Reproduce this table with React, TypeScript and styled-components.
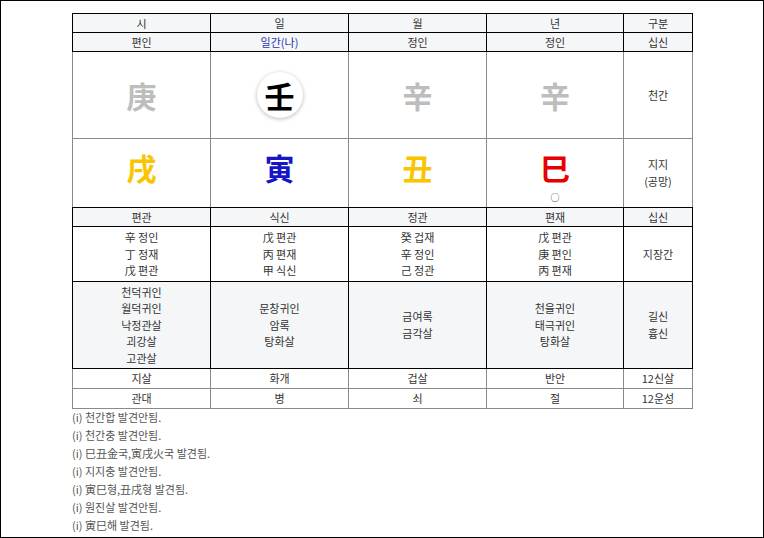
import styled, { createGlobalStyle } from "styled-components";

const GlobalStyle = createGlobalStyle`
  html, body {
    margin: 0;
    padding: 0;
    background: #fff;
  }
  body {
    font-family: "Noto Sans CJK KR", "Noto Sans", sans-serif;
  }
`;

const Frame = styled.div`
  width: 764px;
  height: 538px;
  box-sizing: border-box;
  border: 1px solid #000;
  padding-top: 12px;
`;

const Wrap = styled.div`
  width: 620px;
  margin: 0 auto;
`;

const Table = styled.table`
  width: 620px;
  border-collapse: collapse;
  table-layout: fixed;
  font-size: 11px;
  color: #333;
`;

const Row = styled.tr<{ $h: number }>`
  height: ${(p) => p.$h}px;
`;

const Cell = styled.td<{ $dark?: boolean; $shade?: boolean; $darkBottom?: boolean; $top?: boolean }>`
  border: 1px solid ${(p) => (p.$dark ? "#000" : "#8a8a8a")};
  ${(p) => (p.$darkBottom ? "border-bottom-color: #000;" : "")}
  background: ${(p) => (p.$shade ? "#f5f6f8" : "#fff")};
  text-align: center;
  vertical-align: ${(p) => (p.$top ? "top" : "middle")};
  padding: 0;
  line-height: 16.6px;
`;

const Me = styled.span`
  color: #2b35b0;
`;

const Big = styled.div<{ $color: string }>`
  font-size: 30px;
  font-weight: 700;
  line-height: 30px;
  color: ${(p) => p.$color};
`;

const Circle = styled.div`
  display: inline-flex;
  align-items: center;
  justify-content: center;
  width: 46px;
  height: 46px;
  border-radius: 50%;
  background: #fff;
  box-shadow: 0 1px 4px rgba(0, 0, 0, 0.28);
`;

const BranchBox = styled.div`
  padding-top: 13px;
`;

const Mark = styled.div`
  margin-top: 8px;
  height: 16px;
  line-height: 16px;
  font-size: 9px;
  color: #333;
`;

const Notes = styled.div`
  margin-top: -1px;
  font-size: 11px;
  line-height: 18px;
  color: #555;
`;

const stems = [
  { ch: "庚", color: "#bdbdbd" },
  { ch: "壬", color: "#000", me: true },
  { ch: "辛", color: "#bdbdbd" },
  { ch: "辛", color: "#bdbdbd" },
];

const branches = [
  { ch: "戌", color: "#f8c500", mark: "" },
  { ch: "寅", color: "#1616c8", mark: "" },
  { ch: "丑", color: "#f8c500", mark: "" },
  { ch: "巳", color: "#e60000", mark: "○" },
];

const hidden = [
  ["辛 정인", "丁 정재", "戊 편관"],
  ["戊 편관", "丙 편재", "甲 식신"],
  ["癸 겁재", "辛 정인", "己 정관"],
  ["戊 편관", "庚 편인", "丙 편재"],
];

const sinsal = [
  ["천덕귀인", "월덕귀인", "낙정관살", "괴강살", "고관살"],
  ["문창귀인", "암록", "탕화살"],
  ["금여록", "금각살"],
  ["천을귀인", "태극귀인", "탕화살"],
];

const notes = [
  "천간합 발견안됨.",
  "천간충 발견안됨.",
  "巳丑金국,寅戌火국 발견됨.",
  "지지충 발견안됨.",
  "寅巳형,丑戌형 발견됨.",
  "원진살 발견안됨.",
  "寅巳해 발견됨.",
];

const Lines = ({ items }: { items: string[] }) => (
  <>
    {items.map((t, i) => (
      <div key={i}>{t}</div>
    ))}
  </>
);

export default function App() {
  return (
    <>
      <GlobalStyle />
      <Frame>
        <Wrap>
          <Table>
            <colgroup>
              <col style={{ width: 138 }} />
              <col style={{ width: 138 }} />
              <col style={{ width: 138 }} />
              <col style={{ width: 137 }} />
              <col style={{ width: 69 }} />
            </colgroup>
            <tbody>
              <Row $h={19}>
                {["시", "일", "월", "년", "구분"].map((t) => (
                  <Cell key={t} $dark $shade>
                    {t}
                  </Cell>
                ))}
              </Row>
              <Row $h={19}>
                <Cell $dark $shade>편인</Cell>
                <Cell $dark $shade>
                  <Me>일간(나)</Me>
                </Cell>
                <Cell $dark $shade>정인</Cell>
                <Cell $dark $shade>정인</Cell>
                <Cell $dark $shade>십신</Cell>
              </Row>
              <Row $h={87}>
                {stems.map((s, i) => (
                  <Cell key={i}>
                    {s.me ? (
                      <Circle>
                        <Big $color={s.color}>{s.ch}</Big>
                      </Circle>
                    ) : (
                      <Big $color={s.color}>{s.ch}</Big>
                    )}
                  </Cell>
                ))}
                <Cell>천간</Cell>
              </Row>
              <Row $h={69}>
                {branches.map((b, i) => (
                  <Cell key={i} $top $darkBottom>
                    <BranchBox>
                      <Big $color={b.color}>{b.ch}</Big>
                      <Mark>{b.mark}</Mark>
                    </BranchBox>
                  </Cell>
                ))}
                <Cell $darkBottom>
                  지지
                  <br />
                  (공망)
                </Cell>
              </Row>
              <Row $h={19}>
                {["편관", "식신", "정관", "편재", "십신"].map((t, i) => (
                  <Cell key={i} $dark $shade>
                    {t}
                  </Cell>
                ))}
              </Row>
              <Row $h={55}>
                {hidden.map((h, i) => (
                  <Cell key={i} $dark>
                    <Lines items={h} />
                  </Cell>
                ))}
                <Cell $dark>지장간</Cell>
              </Row>
              <Row $h={87}>
                {sinsal.map((s, i) => (
                  <Cell key={i} $dark $shade>
                    <Lines items={s} />
                  </Cell>
                ))}
                <Cell $dark $shade>
                  <Lines items={["길신", "흉신"]} />
                </Cell>
              </Row>
              <Row $h={20}>
                {["지살", "화개", "겁살", "반안", "12신살"].map((t, i) => (
                  <Cell key={i}>{t}</Cell>
                ))}
              </Row>
              <Row $h={20}>
                {["관대", "병", "쇠", "절", "12운성"].map((t, i) => (
                  <Cell key={i}>{t}</Cell>
                ))}
              </Row>
            </tbody>
          </Table>
          <Notes>
            {notes.map((n, i) => (
              <div key={i}>(i) {n}</div>
            ))}
          </Notes>
        </Wrap>
      </Frame>
    </>
  );
}
